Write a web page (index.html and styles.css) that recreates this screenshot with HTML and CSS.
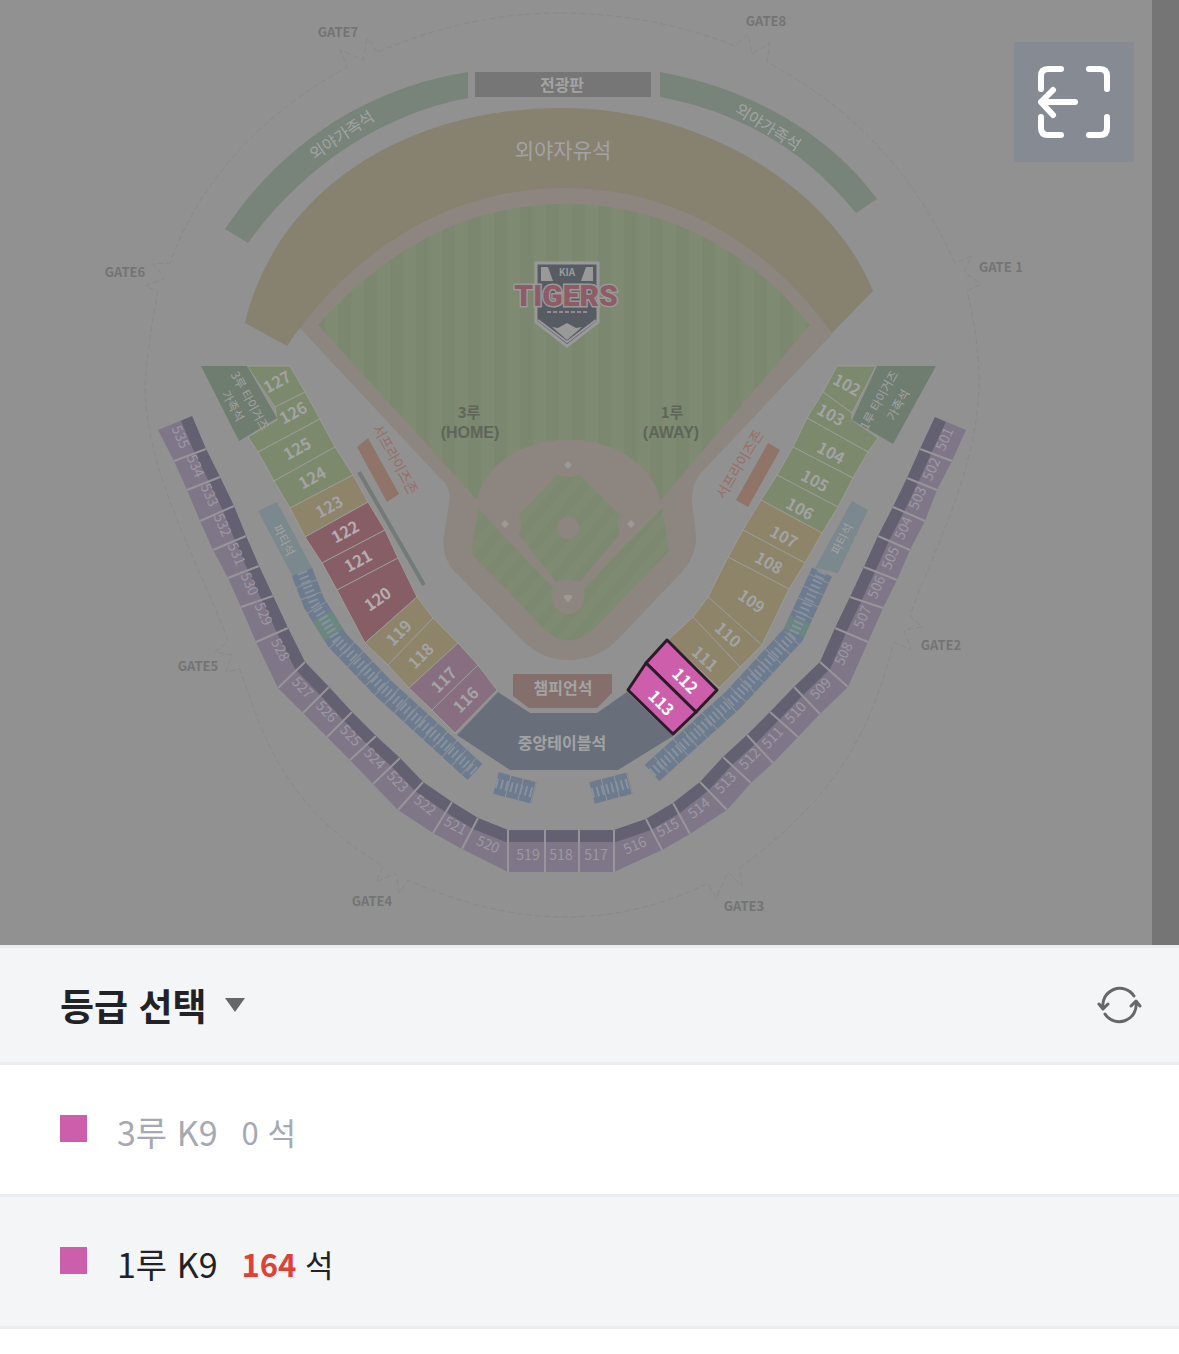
FILE: index.html
```
<!DOCTYPE html>
<html lang="ko">
<head>
    <meta charset="UTF-8">
    <meta name="viewport" content="width=device-width, initial-scale=1.0">
    <title>등급 선택</title>
    <link rel="stylesheet" href="styles.css">
</head>
<body>

<div class="map">
    <svg class="stadium" viewBox="0 0 1152 945" role="img" aria-label="구장 좌석 배치도">
        <defs>
            <pattern id="grass" width="26" height="26" patternUnits="userSpaceOnUse">
                <rect width="26" height="26" fill="#7e8a71"/>
                <rect width="13" height="26" fill="#7b876e"/>
            </pattern>
            <pattern id="grass-diagonal" width="18" height="18" patternUnits="userSpaceOnUse" patternTransform="rotate(40)">
                <rect width="18" height="18" fill="#7e8a71"/>
                <rect width="9" height="18" fill="#7c886f"/>
            </pattern>
            <clipPath id="upper-clip">
                <path d="M192 416 L206 449 L220 477 L234 506 L246 536 L259 566 L273 596 L288 628 L305 662 L329 687 L352 712 L376 736 L400 758 L423 782 L452 802 L478 818 L508 830 H614 L646 819 L673 803 L700 782 L723 757 L747 735 L770 712 L794 687 L820 662 L835 628 L850 597 L864 567 L878 536 L893 507 L907 478 L920 449 L935 417 L966 430 L952 461 L937 490 L925 521 L910 550 L897 580 L883 608 L868 642 L848 687 L820 714 L798 737 L773 763 L751 783 L727 810 L690 834 L662 850 L614 872 H508 L462 849 L433 833 L398 810 L373 784 L350 760 L327 737 L303 713 L278 688 L256 642 L241 607 L228 578 L213 550 L200 521 L187 490 L174 461 L158 430 Z"/>
            </clipPath>
        </defs>

        <!-- outer wall with gates -->
        <path class="wall" d="M378 52 Q468 13 562 13 Q655 14 735 46 L748 34 L752 54 L770 43 L767 62 Q895 130 955 263 L972 256 L964 272 L981 284 L967 291 Q979 340 979 382 C978 470 935 545 910 616 L922 627 L904 630 L911 650 L894 642 C872 720 850 785 740 868 L742 886 L728 872 L716 898 L708 883 Q640 917 565 917 Q490 917 408 880 L399 893 L396 873 L376 882 L383 866 C290 810 265 745 240 669 L226 672 L232 655 L215 652 L228 641 C205 575 145 475 145 385 Q148 340 158 292 L145 286 L165 278 L153 264 L170 263 Q215 140 347 67 L340 50 L363 60 L367 38 Z"/>
        <g class="gate">
            <text x="338" y="37">GATE7</text>
            <text x="766" y="26">GATE8</text>
            <text x="1001" y="272">GATE 1</text>
            <text x="941" y="650">GATE2</text>
            <text x="744" y="911">GATE3</text>
            <text x="372" y="906">GATE4</text>
            <text x="198" y="671">GATE5</text>
            <text x="125" y="277">GATE6</text>
        </g>

        <!-- field -->
        <path fill="#8d8680" d="M298 326 C370 235 460 186 565 186 C670 186 765 240 833 333 L700 474 Q691 486 692 503 L696 535 Q697 556 680 574 L620 637 Q600 660 568 660 Q540 660 519 637 L453 570 Q441 555 444 535 L449 503 Q452 487 440 478 Z"/>
        <path fill="url(#grass)" d="M318 325 C390 245 470 204 566 204 C665 204 750 250 810 325 L661 500 H477 Z"/>
        <path fill="#8d8680" d="M476 504 A93 72 0 0 1 661 504 L568 598 Z"/>
        <path fill="url(#grass-diagonal)" d="M478 508 L553 588 Q550 612 568 613 Q587 612 584 588 L662 508 L669 551 L598 625 Q568 656 540 625 L471 553 Z"/>
        <path fill="url(#grass-diagonal)" d="M557 475 Q568 479 579 475 L620 515 Q616 525 620 534 L580 582 Q568 578 556 582 L519 535 Q523 525 519 515 Z"/>
        <circle cx="568" cy="528" r="11" fill="#8d8680"/>
        <circle cx="568" cy="598" r="16" fill="#8d8680"/>
        <path fill="#9b9897" d="M568 461 l4 4 l-4 4 l-4 -4 Z M505 520 l4 4 l-4 4 l-4 -4 Z M631 520 l4 4 l-4 4 l-4 -4 Z M564 595 h8 v3 l-4 4 l-4 -4 Z"/>

        <!-- outfield seats -->
        <path fill="#878170" d="M245 323 C275 195 400 108 562 108 C700 108 830 185 873 291 L832 333 C765 240 670 188 565 188 C460 188 360 240 287 346 Z"/>
        <path fill="#788379" d="M225 229 C285 140 370 88 468 72 V98 C380 114 300 170 248 243 Z"/>
        <path fill="#788379" d="M660 72 C748 88 828 132 877 199 L856 213 C805 150 740 112 660 97 Z"/>
        <rect x="475" y="72" width="176" height="25" fill="#767676"/>
        <g class="label">
            <text class="size-16 bold" x="562" y="91">전광판</text>
            <text class="size-21" x="563" y="158">외야자유석</text>
            <text class="size-16" transform="translate(345 140) rotate(-34)">외야가족석</text>
            <text class="size-16" transform="translate(765 132) rotate(32)">외야가족석</text>
        </g>

        <!-- team emblem -->
        <path fill="#575c63" stroke="#999" stroke-width="3" d="M536 263 H598 V322 L567 346 L536 322 Z"/>
        <path fill="#999" d="M541 267 h7 l5 14 h-12 Z M593 267 h-7 l-5 14 h12 Z M558 328 L567 323 L576 328 L582 327 L567 340 L552 327 Z"/>
        <path fill="none" stroke="#999" stroke-width="2" d="M538 320 L567 342 L596 320"/>
        <text class="emblem-top" x="567" y="276">KIA</text>
        <text class="emblem" x="566" y="306">TIGERS</text>
        <path stroke="#8d8f92" stroke-width="2" stroke-dasharray="4 2" d="M547 312 H588"/>

        <g class="side">
            <text class="base" x="469" y="418">3루</text>
            <text x="470" y="438">(HOME)</text>
            <text class="base" x="672" y="418">1루</text>
            <text x="671" y="438">(AWAY)</text>
        </g>

        <!-- dugout seats -->
        <path fill="#8f7467" d="M368 438 L399 494 L387 502 L357 447 Z M768 443 L780 450 L748 507 L736 500 Z"/>
        <path stroke="#727b77" stroke-width="4" d="M359 472 L424 585"/>
        <g class="dugout">
            <text transform="translate(391 462) rotate(61)">서프라이즈존</text>
            <text transform="translate(744 467) rotate(-59)">서프라이즈존</text>
        </g>

        <!-- lower blocks, 3rd base side -->
        <g class="block">
            <path class="green" d="M247 366 H290 L305 392 L275 407 Z"/>
            <path class="green" d="M305 392 L320 419 L258 452 L248 437 L277 420 L275 407 Z"/>
            <path class="green" d="M320 419 L335 447 L274 481 L258 452 Z"/>
            <path class="green" d="M335 447 L353 475 L290 508 L274 481 Z"/>
            <path class="yellow" d="M353 475 L368 502 L305 537 L290 508 Z"/>
            <path class="red" d="M368 502 L385 530 L322 563 L305 537 Z"/>
            <path class="red" d="M385 530 L398 558 L337 590 L322 563 Z"/>
            <path class="red" d="M398 558 L417 597 L365 643 L337 590 Z"/>
            <path class="yellow" d="M417 597 L433 618 L388 665 L365 643 Z"/>
            <path class="yellow" d="M433 618 L458 643 L409 688 L388 665 Z"/>
            <path class="pink" d="M458 643 L478 665 L432 710 L409 688 Z"/>
            <path class="pink" d="M478 665 L497 690 L455 733 L432 710 Z"/>
            <path class="forest" d="M201 366 H247 L277 418 L239 441 Z"/>
        </g>
        <!-- lower blocks, 1st base side -->
        <g class="block">
            <path class="green" d="M837 366 H876 L852 413 L823 392 Z"/>
            <path class="green" d="M823 392 L852 413 V420 L878 438 L868 452 L807 418 Z"/>
            <path class="green" d="M807 418 L868 452 L853 478 L793 447 Z"/>
            <path class="green" d="M793 447 L853 478 L838 507 L777 475 Z"/>
            <path class="green" d="M777 475 L838 507 L822 533 L761 500 Z"/>
            <path class="yellow" d="M761 500 L822 533 L805 563 L743 530 Z"/>
            <path class="yellow" d="M743 530 L805 563 L789 589 L728 557 Z"/>
            <path class="yellow" d="M728 557 L789 589 L762 645 L708 597 Z"/>
            <path class="yellow" d="M708 597 L762 645 L740 667 L693 617 Z"/>
            <path class="yellow" d="M693 617 L740 667 L719 688 L668 640 Z"/>
            <path class="forest" d="M877 366 H936 L893 444 L852 420 Z"/>
        </g>
        <!-- behind home plate -->
        <path fill="#696f7a" d="M498 692 L530 713 H597 L627 692 L673 736 L618 770 H510 L457 735 Z"/>
        <path fill="#846f6d" d="M513 674 H612 V693 L597 708 H529 L513 696 Z"/>

        <g class="label size-16 bold">
            <text transform="translate(280 387) rotate(-29)">127</text>
            <text transform="translate(296 418) rotate(-29)">126</text>
            <text transform="translate(300 454) rotate(-29)">125</text>
            <text transform="translate(315 483) rotate(-29)">124</text>
            <text transform="translate(332 512) rotate(-29)">123</text>
            <text transform="translate(403 637) rotate(-45)">119</text>
            <text transform="translate(425 660) rotate(-45)">118</text>
            <text transform="translate(448 684) rotate(-45)">117</text>
            <text transform="translate(470 704) rotate(-45)">116</text>
            <text transform="translate(844 390) rotate(29)">102</text>
            <text transform="translate(828 420) rotate(29)">103</text>
            <text transform="translate(828 458) rotate(29)">104</text>
            <text transform="translate(812 486) rotate(29)">105</text>
            <text transform="translate(797 514) rotate(29)">106</text>
            <text transform="translate(781 542) rotate(29)">107</text>
            <text transform="translate(766 568) rotate(29)">108</text>
            <text transform="translate(748 606) rotate(35)">109</text>
            <text transform="translate(724 639) rotate(42)">110</text>
            <text transform="translate(701 663) rotate(42)">111</text>
        </g>
        <g class="label size-16 bold bright">
            <text transform="translate(348 537) rotate(-29)">122</text>
            <text transform="translate(361 566) rotate(-29)">121</text>
            <text transform="translate(381 604) rotate(-35)">120</text>
        </g>
        <g class="label">
            <text class="size-16 bold" x="563" y="694">챔피언석</text>
            <text class="size-16 bold" x="562" y="749">중앙테이블석</text>
            <text class="size-12" transform="translate(246 403) rotate(61)">3루 타이거즈</text>
            <text class="size-12" transform="translate(229 408) rotate(61)">가족석</text>
            <text class="size-12" transform="translate(883 402) rotate(-61)">1루 타이거즈</text>
            <text class="size-12" transform="translate(902 407) rotate(-61)">가족석</text>
        </g>

        <!-- party seats and skyboxes -->
        <path fill="#7b888e" d="M258 511 L277 502 L312 568 L293 577 Z M852 501 L868 510 L838 573 L815 568 Z"/>
        <g class="label size-12">
            <text transform="translate(280 542) rotate(63)">파티석</text>
            <text transform="translate(846 541) rotate(-63)">파티석</text>
        </g>
        <g class="skybox">
            <path d="M302 572 L314 603 L337 640 L383 688 L475 772"/>
            <path d="M496 783 L534 793"/>
            <path d="M592 793 L630 783"/>
            <path d="M652 773 L733 700 L793 635 L822 572"/>
            <path class="green" d="M322 616 L334 635 M800 620 L794 633"/>
        </g>
        <g class="skybox-seats">
            <path d="M302 572 L314 603 L337 640 L383 688 L475 772"/>
            <path d="M496 783 L534 793"/>
            <path d="M592 793 L630 783"/>
            <path d="M652 773 L733 700 L793 635 L822 572"/>
        </g>

        <!-- upper deck -->
        <g clip-path="url(#upper-clip)">
            <rect x="150" y="410" width="830" height="470" fill="#7f7788"/>
            <path fill="none" stroke="#636071" stroke-width="24" d="M192 416 L206 449 L220 477 L234 506 L246 536 L259 566 L273 596 L288 628 L305 662 L329 687 L352 712 L376 736 L400 758 L423 782 L452 802 L478 818 L508 830 H614 L646 819 L673 803 L700 782 L723 757 L747 735 L770 712 L794 687 L820 662 L835 628 L850 597 L864 567 L878 536 L893 507 L907 478 L920 449 L935 417"/>
            <path stroke="#979599" stroke-width="2" d="M206 449 L174 461 M220 477 L187 490 M234 506 L200 521 M246 536 L213 550 M259 566 L228 578 M273 596 L241 607 M288 628 L256 642 M305 662 L278 688 M329 687 L303 713 M352 712 L327 737 M376 736 L350 760 M400 758 L373 784 M423 782 L398 810 M452 802 L433 833 M478 818 L462 849 M508 830 V872 M545 830 V872 M579 830 V872 M614 830 V872 M646 819 L662 850 M673 803 L690 834 M700 782 L727 810 M723 757 L751 783 M747 735 L773 763 M770 712 L798 737 M794 687 L820 714 M820 662 L848 687 M835 628 L868 642 M850 597 L883 608 M864 567 L897 580 M878 536 L910 550 M893 507 L925 521 M907 478 L937 490 M920 449 L952 461"/>
        </g>
        <g class="label size-14 upper">
            <text transform="translate(176 439) rotate(66)">535</text>
            <text transform="translate(191 468) rotate(66)">534</text>
            <text transform="translate(205 497) rotate(66)">533</text>
            <text transform="translate(218 527) rotate(66)">532</text>
            <text transform="translate(232 556) rotate(66)">531</text>
            <text transform="translate(245 586) rotate(66)">530</text>
            <text transform="translate(259 616) rotate(66)">529</text>
            <text transform="translate(276 652) rotate(62)">528</text>
            <text transform="translate(299 691) rotate(46)">527</text>
            <text transform="translate(323 715) rotate(46)">526</text>
            <text transform="translate(347 739) rotate(46)">525</text>
            <text transform="translate(371 762) rotate(46)">524</text>
            <text transform="translate(394 785) rotate(46)">523</text>
            <text transform="translate(422 809) rotate(38)">522</text>
            <text transform="translate(453 830) rotate(28)">521</text>
            <text transform="translate(486 849) rotate(24)">520</text>
            <text x="528" y="860">519</text>
            <text x="561" y="860">518</text>
            <text x="596" y="860">517</text>
            <text transform="translate(637 850) rotate(-24)">516</text>
            <text transform="translate(670 832) rotate(-28)">515</text>
            <text transform="translate(702 812) rotate(-38)">514</text>
            <text transform="translate(729 786) rotate(-46)">513</text>
            <text transform="translate(753 762) rotate(-46)">512</text>
            <text transform="translate(776 741) rotate(-46)">511</text>
            <text transform="translate(799 716) rotate(-46)">510</text>
            <text transform="translate(824 692) rotate(-46)">509</text>
            <text transform="translate(848 656) rotate(-64)">508</text>
            <text transform="translate(867 619) rotate(-66)">507</text>
            <text transform="translate(881 589) rotate(-66)">506</text>
            <text transform="translate(895 560) rotate(-66)">505</text>
            <text transform="translate(908 530) rotate(-66)">504</text>
            <text transform="translate(922 500) rotate(-66)">503</text>
            <text transform="translate(936 471) rotate(-66)">502</text>
            <text transform="translate(949 441) rotate(-66)">501</text>
        </g>

        <!-- blocks of the selected grade -->
        <g class="selected">
            <path d="M667 640 L717 690 L696 712 L646 663 Z"/>
            <path d="M646 663 L696 712 L673 734 L628 690 Z"/>
            <text transform="translate(681 685) rotate(45)">112</text>
            <text transform="translate(657 707) rotate(45)">113</text>
        </g>
    </svg>
    <button class="back-btn" type="button" aria-label="전체 보기">
        <svg viewBox="0 0 120 120">
            <path d="M47 27 H34 Q27 27 27 34 V47 M75 27 H86 Q93 27 93 34 V47 M27 75 V86 Q27 93 34 93 H47 M93 75 V86 Q93 93 86 93 H75 M61 60 H27 M39 48 L27 60 L39 73"/>
        </svg>
    </button>
</div>

<div class="grade-header">
    <button class="grade-toggle" type="button">
        등급 선택
        <svg class="caret" viewBox="0 0 20 14"><path d="M0 0 H20 L10 14 Z"/></svg>
    </button>
    <button class="refresh-btn" type="button" aria-label="새로고침">
        <svg viewBox="0 0 45 40">
            <path d="M37 11 A17 17 0 0 0 6 23 M2 19 L6 24 L11 19 M8 29 A17 17 0 0 0 39 17 M34 21 L39 16 L43 21"/>
        </svg>
    </button>
</div>

<ul class="grade-list">
    <li>
        <button class="grade" type="button" disabled>
            <span class="swatch"></span>
            <span class="name">3루 K9</span>
            <span class="seats">0 석</span>
        </button>
    </li>
    <li>
        <button class="grade active" type="button">
            <span class="swatch"></span>
            <span class="name">1루 K9</span>
            <span class="seats"><strong>164</strong> 석</span>
        </button>
    </li>
</ul>

</body>
</html>
```
FILE: styles.css
```
body {
    margin: 0;
    background-color: #fff;
    color: #222226;
    font-family: "Noto Sans CJK KR", sans-serif;
}
button {
    margin: 0;
    padding: 0;
    border: none;
    background: none;
    color: inherit;
    font-family: inherit;
    cursor: pointer;
}
svg {
    display: block;
}
.map {
    position: relative;
    padding-right: 27px;
    background-color: #757575;
}
.stadium {
    width: 100%;
    height: auto;
    background-color: #919191;
}
.back-btn {
    position: absolute;
    top: 42px;
    right: 45px;
    width: 120px;
    height: 120px;
    background-color: #868b93;
}
.back-btn path {
    fill: none;
    stroke: #fff;
    stroke-width: 6;
    stroke-linecap: round;
    stroke-linejoin: round;
}

/* stadium drawing */
.stadium text {
    text-anchor: middle;
}
.wall {
    fill: none;
    stroke: #898989;
    stroke-width: 1;
    stroke-dasharray: 6 3;
}
.gate {
    fill: #747474;
    font-size: 13px;
    font-weight: bold;
}
.side {
    fill: #5f6659;
    font-family: "Liberation Sans", sans-serif;
    font-size: 16px;
    font-weight: bold;
}
.side .base {
    font-family: "Noto Sans CJK KR", sans-serif;
    font-size: 15px;
}
.dugout {
    fill: #986e66;
    font-size: 14px;
}
.label {
    fill: #a3a3a3;
}
.label.bright {
    fill: #b5adaf;
}
.label.upper {
    fill: #9d98a3;
}
.size-12 {
    font-size: 12px;
}
.size-14 {
    font-size: 14px;
}
.size-16 {
    font-size: 16px;
}
.size-21 {
    font-size: 21px;
}
.bold {
    font-weight: bold;
}
.emblem {
    fill: #8d5c66;
    stroke: #999;
    stroke-width: 3;
    paint-order: stroke;
    font-family: Roboto, sans-serif;
    font-size: 30px;
    font-weight: 900;
}
.emblem-top {
    fill: #999;
    font-size: 10px;
    font-weight: bold;
}
.block path {
    stroke: #9b9b95;
    stroke-width: 1;
}
.block .green {
    fill: #7d896d;
}
.block .yellow {
    fill: #8d846a;
}
.block .red {
    fill: #885e66;
}
.block .pink {
    fill: #876f81;
}
.block .forest {
    fill: #6f7d70;
    stroke: none;
}
.skybox path {
    fill: none;
    stroke: #6d7b8f;
    stroke-width: 22;
    stroke-dasharray: 12 1;
}
.skybox .green {
    stroke: #6c877f;
    stroke-dasharray: none;
}
.skybox-seats path {
    fill: none;
    stroke: #8791a0;
    stroke-width: 10;
    stroke-dasharray: 2 3;
}
.selected path {
    fill: #cc5eab;
    stroke: #2e1b29;
    stroke-width: 3;
    stroke-linejoin: round;
}
.selected text {
    fill: #fff;
    font-size: 16px;
    font-weight: bold;
}

/* grade panel */
.grade-header {
    display: flex;
    align-items: center;
    justify-content: space-between;
    box-sizing: border-box;
    height: 120px;
    padding: 0 37px 0 60px;
    border-top: 3px solid #ebecee;
    border-bottom: 3px solid #ebecee;
    background-color: #f4f5f7;
}
.grade-toggle {
    display: flex;
    align-items: center;
    gap: 18px;
    font-size: 37px;
    font-weight: bold;
}
.caret {
    width: 20px;
    height: 14px;
    fill: #66676b;
}
.refresh-btn svg {
    width: 45px;
    height: 40px;
    fill: none;
    stroke: #66676b;
    stroke-width: 3;
    stroke-linecap: round;
    stroke-linejoin: round;
}
.grade-list {
    margin: 0;
    padding: 0;
    list-style: none;
}
.grade {
    display: flex;
    align-items: center;
    box-sizing: border-box;
    width: 100%;
    height: 132px;
    padding: 0 60px 2px;
    border-bottom: 3px solid #ebecee;
    text-align: left;
}
.grade.active {
    background-color: #f4f5f7;
}
.grade:disabled {
    color: #a6a9b2;
    cursor: default;
}
.swatch {
    width: 27px;
    height: 27px;
    margin-right: 30px;
    background-color: #cc5eab;
}
.name,
.seats {
    padding-top: 6px;
}
.name {
    margin-right: 24px;
    font-size: 34px;
}
.seats {
    font-size: 31px;
}
.seats strong {
    color: #dc4238;
}
```
